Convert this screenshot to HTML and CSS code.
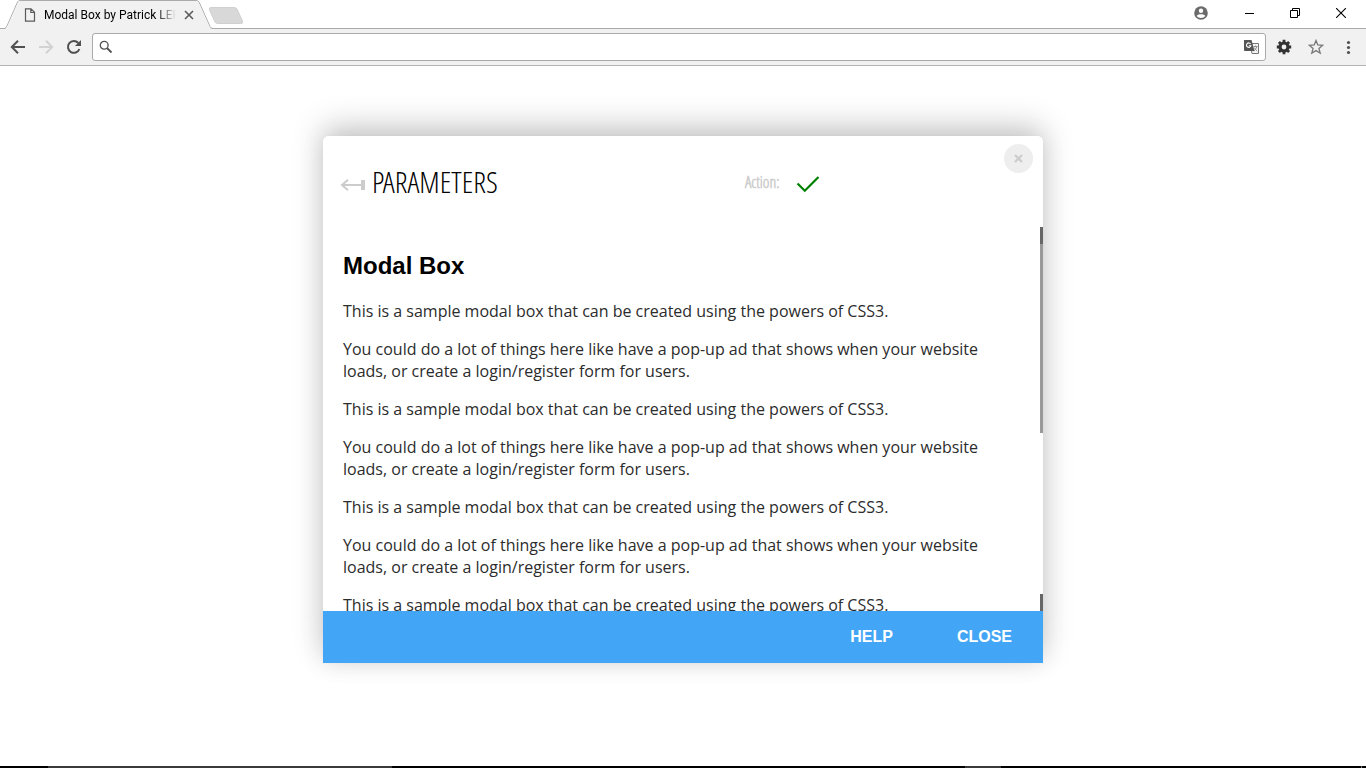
FILE: index.html
```html
<!DOCTYPE html>
<html lang="en">
<head>
<meta charset="utf-8">
<title>Modal Box by Patrick LEF</title>
<link rel="stylesheet" href="styles.css">
</head>
<body>
<header class="chrome">
  <div class="tabstrip">
    <svg class="tab-shape" width="260" height="29" viewBox="0 0 260 29" aria-hidden="true">
      <path d="M0 28.500H4.500Q6 28 7 26L17.500 2Q18.500.5 20 .5H196Q198 .5 199 2L210 26.500Q211 28.500 213 28.500H260" fill="none" stroke="#aaa"/>
      <path d="M5 29Q6.500 28 7.500 26L18 2.500Q18.500 1 20 1H196Q197.500 1 198.500 2.500L209.500 27Q210.500 29 213 29Z" fill="#f1f1f1"/>
      <path d="M211 7.500H234Q236 7.500 237 9L242.500 21Q243.500 23.500 241 23.500H218Q216 23.500 215 22L209.500 10Q208.500 7.500 211 7.500Z" fill="#d8d8d8" stroke="#d0d0d0"/>
    </svg>
    <div class="tab">
      <svg width="12" height="14" viewBox="0 0 12 14" fill="none" stroke="#5a5a5a" stroke-width="1.2"><path d="M1.500.8H7L10.500 4.300V13.200H1.500Z M6.800.8V4.500H10.500"/></svg>
      <span class="tab-title">Modal Box by Patrick LEF</span>
      <button class="icon-button" aria-label="Close tab"><svg width="10" height="10" viewBox="0 0 10 10" stroke="#5a5a5a" stroke-width="1.600"><path d="M1 1L9 9M9 1L1 9"/></svg></button>
    </div>
    <div class="window-buttons">
      <button class="icon-button" aria-label="Account"><svg width="14" height="14" viewBox="0 0 14 14"><circle cx="7" cy="7" r="6.800" fill="#6b6b6b"/><circle cx="7" cy="4.700" r="2.200" fill="#fff"/><path d="M2.700 10C3.500 7.700 10.500 7.700 11.300 10C9.500 12.500 4.500 12.500 2.700 10Z" fill="#fff"/></svg></button>
      <button class="icon-button" aria-label="Minimize"><svg width="10" height="10" viewBox="0 0 10 10"><path d="M1 5.500H10" stroke="#000"/></svg></button>
      <button class="icon-button" aria-label="Restore"><svg width="10" height="10" viewBox="0 0 10 10" fill="none" stroke="#000"><path d="M.5 2.500H7.500V9.500H.5ZM2.500 2.500V.5H9.500V7.500H7.500"/></svg></button>
      <button class="icon-button" aria-label="Close window"><svg width="10" height="10" viewBox="0 0 10 10" stroke="#000" stroke-width="1.100"><path d="M0 0L10 10M10 0L0 10"/></svg></button>
    </div>
  </div>
  <div class="toolbar">
    <button class="icon-button" aria-label="Back"><svg width="16" height="16" viewBox="0 0 16 16" fill="none" stroke="#505050" stroke-width="2"><path d="M15 8H2.500M8 1.800L1.800 8L8 14.200"/></svg></button>
    <button class="icon-button" aria-label="Forward"><svg width="16" height="16" viewBox="0 0 16 16" fill="none" stroke="#d2d2d2" stroke-width="2"><path d="M1 8H13.500M8 1.800L14.200 8L8 14.200"/></svg></button>
    <button class="icon-button" aria-label="Reload"><svg width="16" height="16" viewBox="0 0 16 16"><path d="M13.400 10A5.900 5.900 0 1 1 12.300 4" fill="none" stroke="#505050" stroke-width="2"/><path d="M15 1V7H9Z" fill="#505050"/></svg></button>
    <div class="address">
      <svg width="14" height="14" viewBox="0 0 14 14" fill="none" stroke="#505050"><circle cx="5.200" cy="5.200" r="3.900" stroke-width="1.300"/><path d="M8 8L12.500 12.500" stroke-width="1.800"/></svg>
      <input class="address-input" type="text" aria-label="Address">
      <button class="icon-button" aria-label="Translate"><svg width="15" height="14" viewBox="0 0 15 14"><path d="M6 3.500H14.500V13.500H8Z" fill="#f4f4f4" stroke="#777"/><path d="M0 0H7.500L10.500 11H1Q0 11 0 10Z" fill="#555"/><path d="M6.600 4A2.200 2.200 0 1 0 6.800 5.800H4.800" fill="none" stroke="#fff" stroke-width="1.100"/><path d="M9.500 6.500H13.500M11.500 5.500V6.500M13 6.500Q12 9.500 9.800 11M10.200 7.500Q11.500 10 13.200 11" fill="none" stroke="#888" stroke-width=".9"/></svg></button>
    </div>
    <button class="icon-button" aria-label="Settings"><svg width="16" height="16" viewBox="0 0 16 16"><circle cx="8" cy="8" r="4" fill="none" stroke="#333" stroke-width="3.200"/><path d="M8 .8V3M8 13V15.200M.8 8H3M13 8H15.200M2.900 2.900L4.500 4.500M11.500 11.500L13.100 13.100M2.900 13.100L4.500 11.500M11.500 4.500L13.100 2.900" stroke="#333" stroke-width="2.800"/></svg></button>
    <button class="icon-button" aria-label="Bookmark"><svg width="16" height="16" viewBox="0 0 16 16" fill="none" stroke="#777" stroke-width="1.300"><path d="M8 1.500L9.800 6L14.700 6.300L10.900 9.400L12.200 14.200L8 11.600L3.800 14.200L5.100 9.400L1.300 6.300L6.200 6Z"/></svg></button>
    <button class="icon-button" aria-label="Menu"><svg width="16" height="16" viewBox="0 0 16 16" fill="#505050"><circle cx="8.500" cy="3.500" r="1.600"/><circle cx="8.500" cy="8.500" r="1.600"/><circle cx="8.500" cy="13.500" r="1.600"/></svg></button>
  </div>
</header>
<main class="page">
  <section class="modal" role="dialog" aria-labelledby="modal-title">
    <header class="modal-header">
      <svg width="26" height="12" viewBox="0 0 26 12" fill="none" stroke="#ccc"><path d="M1.500 6H21M8 .8L2 6L8 11.200" stroke-width="2"/><path d="M23 1V11" stroke-width="4"/></svg>
      <h1 class="modal-title" id="modal-title">PARAMETERS</h1>
      <div class="action"><span class="action-label">Action:</span>
        <button class="icon-button" aria-label="Confirm"><svg width="24" height="18" viewBox="0 0 24 18" fill="none" stroke="green" stroke-width="2.200"><path d="M1.500 7.500L8.800 14.800L22.500 1"/></svg></button></div>
      <button class="modal-close" aria-label="Close"><svg width="9" height="9" viewBox="0 0 9 9" stroke="#ccc" stroke-width="2.200"><path d="M1 1L8 8M8 1L1 8"/></svg></button>
    </header>
    <div class="modal-body">
      <div class="modal-content">
        <h2 class="content-title">Modal Box</h2>
        <p class="text">This is a sample modal box that can be created using the powers of CSS3.</p>
        <p class="text">You could do a lot of things here like have a pop-up ad that shows when your website loads, or create a login/register form for users.</p>
        <p class="text">This is a sample modal box that can be created using the powers of CSS3.</p>
        <p class="text">You could do a lot of things here like have a pop-up ad that shows when your website loads, or create a login/register form for users.</p>
        <p class="text">This is a sample modal box that can be created using the powers of CSS3.</p>
        <p class="text">You could do a lot of things here like have a pop-up ad that shows when your website loads, or create a login/register form for users.</p>
        <p class="text">This is a sample modal box that can be created using the powers of CSS3.</p>
      </div>
      <div class="scrollbar" aria-hidden="true"><span class="scroll-end"></span><span class="scroll-thumb"></span><span class="scroll-end scroll-bottom"></span></div>
    </div>
    <footer class="modal-footer">
      <button class="footer-button">HELP</button>
      <button class="footer-button">CLOSE</button>
    </footer>
  </section>
</main>
<div class="taskbar" aria-hidden="true"><span class="task-search"></span><span class="task-tray"></span><span class="task-edge"></span></div>
</body>
</html>
```
FILE: styles.css
```css
* { box-sizing: border-box; }
body {
  margin: 0;
  min-height: 100vh;
  display: flex;
  flex-direction: column;
  background: #fff;
  color: #000;
  font-family: "Open Sans", sans-serif;
}
button { padding: 0; border: 0; background: none; font: inherit; cursor: pointer; }
svg { display: block; flex: none; }
.icon-button { display: flex; flex: none; }

.tabstrip {
  position: relative;
  display: flex;
  justify-content: space-between;
  height: 29px;
  border-bottom: 1px solid #aaa;
}
.tab-shape { position: absolute; top: 0; left: 0; }
.tab {
  position: relative;
  display: flex;
  align-items: center;
  gap: 8px;
  padding: 1px 0 0 24px;
}
.tab-title {
  width: 132px;
  overflow: hidden;
  white-space: nowrap;
  font: 12px/16px Roboto, sans-serif;
  mask-image: linear-gradient(to right, #000 85%, transparent);
}
.window-buttons { display: flex; align-items: center; gap: 36px; padding: 0 20px 3px 0; }

.toolbar {
  display: flex;
  align-items: center;
  gap: 16px;
  height: 37px;
  padding: 0 10px;
  background: #f1f1f1;
  border-bottom: 1px solid #b4b4b4;
}
.toolbar > .icon-button + .icon-button { margin-left: -4px; }
.toolbar > .address + .icon-button { margin-left: -6px; }
.address + .icon-button ~ .icon-button { margin-left: 0; }
.address {
  flex: 1;
  display: flex;
  align-items: center;
  gap: 8px;
  height: 28px;
  margin-left: -6px;
  padding: 0 6px;
  background: #fff;
  border: 1px solid #a9a9a9;
  border-radius: 3px;
}
.address-input { flex: 1; min-width: 0; border: 0; outline: 0; background: none; font: 14px "Open Sans", sans-serif; }

.page { flex: 1; padding: 70px 20px 0; }
.modal {
  max-width: 720px;
  margin: 0 auto;
  background: #fff;
  border-radius: 5px 5px 0 0;
  box-shadow: 0 0 1px rgba(0, 0, 0, .1), 0 -10px 32px rgba(0, 0, 0, .2), 0 0 24px rgba(0, 0, 0, .08);
}
.modal-header {
  position: relative;
  display: flex;
  align-items: center;
  gap: 6px;
  height: 91px;
  padding: 6px 17px 0;
}
.modal-title {
  flex: 1;
  margin: 0;
  padding-bottom: 6px;
  font: 300 30px/40px "Open Sans Condensed Light", "Open Sans Light Condensed", "Open Sans Condensed", sans-serif;
}
.action { display: flex; flex: 0 0 281px; align-items: center; gap: 16px; }
.action-label {
  padding-bottom: 6px;
  color: #ccc;
  font: 700 16px/20px "Open Sans Condensed Light", "Open Sans Condensed", sans-serif;
}
.modal-close {
  position: absolute;
  top: 8px;
  right: 10px;
  display: flex;
  align-items: center;
  justify-content: center;
  width: 29px;
  height: 29px;
  border-radius: 50%;
  background: #eee;
}
.modal-body { display: flex; height: 384px; overflow: hidden; }
.modal-content { flex: 1; padding: 24px 37px 0 20px; }
.content-title { margin: 0 0 20px; font: 700 24px/29px "Liberation Sans", sans-serif; }
.text { margin: 0 0 16px; color: #2c2c2c; font-size: 16px; line-height: 22px; }
.scrollbar { display: flex; flex-direction: column; width: 3px; }
.scroll-end { height: 17px; background: #666; }
.scroll-bottom { margin-top: auto; }
.scroll-thumb { height: 189px; background: #999; }
.modal-footer {
  display: flex;
  align-items: center;
  justify-content: flex-end;
  gap: 64px;
  height: 52px;
  padding: 0 31px;
  background: #42a5f5;
}
.footer-button { color: #fff; font: 700 16px/20px "Liberation Sans", sans-serif; }

.taskbar { display: flex; height: 2px; padding: 0 4px 0 48px; background: #000; }
.task-search { width: 344px; background: #3a3a3a; }
.task-tray { width: 36px; margin-left: auto; background: #3a3a3a; }
.task-edge { width: 1px; margin-left: 360px; background: #777; }
```
